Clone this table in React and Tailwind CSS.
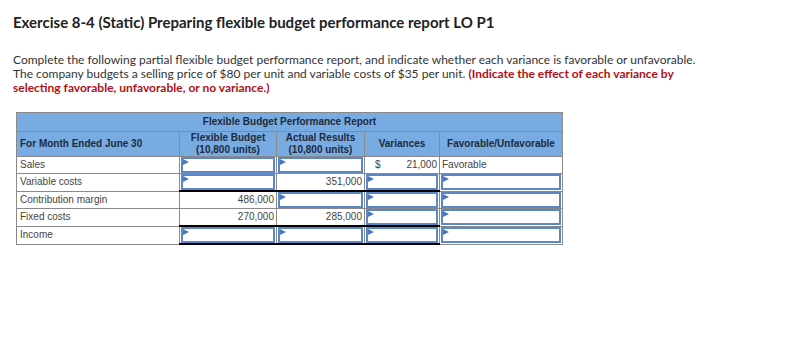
import React from "react";

function Input() {
  return (
    <div className="relative h-[16px] border-2 border-[#5b87c5] bg-white">
      <span className="absolute left-0 top-0 h-0 w-0 border-y-[3px] border-l-[6px] border-y-transparent border-l-[#4a78c0]" />
    </div>
  );
}

export default function App() {
  const rows = [
    { label: "Sales", flex: null, actual: null, variance: "21,000", fav: "Favorable" },
    { label: "Variable costs", flex: null, actual: "351,000", line: true },
    { label: "Contribution margin", flex: "486,000", actual: null },
    { label: "Fixed costs", flex: "270,000", actual: "285,000", line: true },
    { label: "Income", flex: null, actual: null, line: true },
  ];

  const cell = "border border-[#8a8a8a] p-0 h-[17px] align-middle";

  return (
    <div className="w-[789px] h-[349px] bg-white text-[#333]" style={{ fontFamily: "Lato, 'Open Sans', sans-serif" }}>
      <h1 className="pl-[13px] pt-[13px] text-[15px] font-bold text-[#222] leading-[18px]">
        Exercise 8-4 (Static) Preparing flexible budget performance report LO P1
      </h1>

      <div className="pl-[13px] pt-[22px] text-[12px] leading-[14px] text-[#333]">
        <p>Complete the following partial flexible budget performance report, and indicate whether each variance is favorable or unfavorable.</p>
        <p>
          The company budgets a selling price of $80 per unit and variable costs of $35 per unit.{" "}
          <span className="font-bold text-[#b00f17]">(Indicate the effect of each variance by</span>
        </p>
        <p className="font-bold text-[#b00f17]">selecting favorable, unfavorable, or no variance.)</p>
      </div>

      <div className="pl-[16px] pt-[17px]">
        <table
          className="table-fixed border-collapse border border-[#8a8a8a] text-[10px] leading-[12px]"
          style={{ fontFamily: "'Liberation Sans', Arial, sans-serif", width: 546 }}
        >
          <colgroup>
            <col className="w-[163px]" />
            <col className="w-[97px]" />
            <col className="w-[88px]" />
            <col className="w-[75px]" />
            <col className="w-[123px]" />
          </colgroup>
          <thead>
            <tr className="bg-[#77abe2] text-[#1e2a3a]">
              <th colSpan={5} className="border border-[#8a8a8a] h-[19px] text-center font-bold">
                Flexible Budget Performance Report
              </th>
            </tr>
            <tr className="bg-[#77abe2] text-[#1e2a3a]">
              <th className="border border-[#8a8a8a] h-[24px] text-left pl-[3px] font-bold">For Month Ended June 30</th>
              <th className="border border-[#8a8a8a] text-center font-bold">
                Flexible Budget
                <br />
                (10,800 units)
              </th>
              <th className="border border-[#8a8a8a] text-center font-bold">
                Actual Results
                <br />
                (10,800 units)
              </th>
              <th className="border border-[#8a8a8a] text-center font-bold">Variances</th>
              <th className="border border-[#8a8a8a] text-center font-bold">Favorable/Unfavorable</th>
            </tr>
          </thead>
          <tbody>
            {rows.map((r, i) => {
              const bottom = r.line ? "border-b-2 border-b-black" : "";
              return (
                <tr key={i}>
                  <td className={`${cell} pl-[3px] text-[#444]`}>{r.label}</td>
                  <td className={`${cell} ${bottom} ${r.flex ? "text-right pr-[2px] text-[#444]" : "px-[1px]"}`}>
                    {r.flex ? r.flex : <Input />}
                  </td>
                  <td className={`${cell} ${bottom} ${r.actual ? "text-right pr-[2px] text-[#444]" : "px-[1px]"}`}>
                    {r.actual ? r.actual : <Input />}
                  </td>
                  <td className={`${cell} ${bottom} ${r.variance ? "pr-[2px] text-[#444]" : "px-[1px]"}`}>
                    {r.variance ? (
                      <div className="flex justify-between pl-[10px]">
                        <span>$</span>
                        <span>{r.variance}</span>
                      </div>
                    ) : (
                      <Input />
                    )}
                  </td>
                  <td className={`${cell} ${r.fav ? "pl-[2px] text-[#444]" : "px-[1px]"}`}>
                    {r.fav ? r.fav : <Input />}
                  </td>
                </tr>
              );
            })}
          </tbody>
        </table>
      </div>
    </div>
  );
}
